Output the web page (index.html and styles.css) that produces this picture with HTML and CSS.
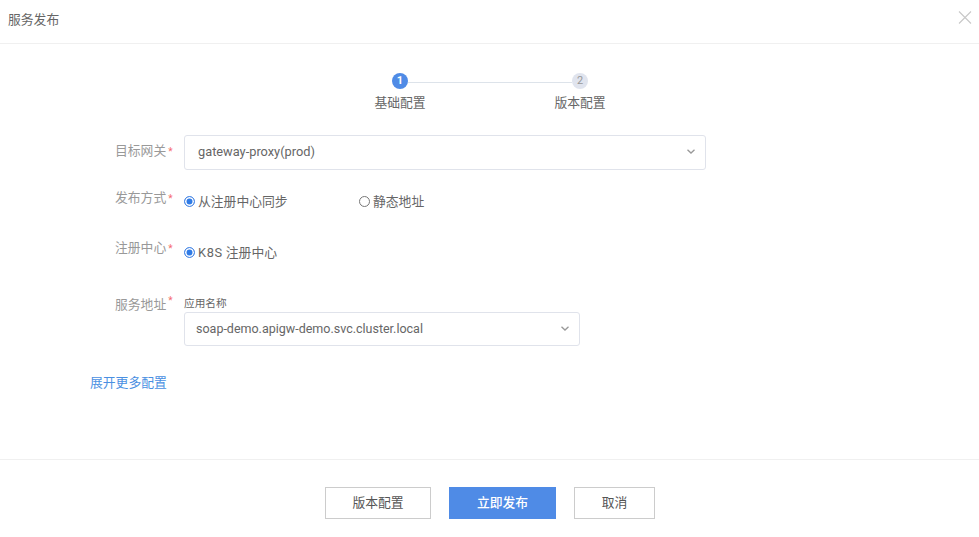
FILE: index.html
```html
<!DOCTYPE html>
<html lang="zh-CN">
<head>
<meta charset="utf-8">
<title>服务发布</title>
<link rel="stylesheet" href="styles.css">
</head>
<body>
<div class="dialog">
  <header class="head">
    <span class="title">服务发布</span>
    <svg class="close" width="14" height="13" viewBox="0 0 14 13"><path d="M1 .5l12 12M13 .5l-12 12" stroke="#c8c8c8" stroke-width="1.1" fill="none"/></svg>
  </header>
  <main class="body">
    <div class="steps">
      <div class="step">
        <span class="dot dot-on">1</span>
        <span class="step-label">基础配置</span>
      </div>
      <span class="step-line"></span>
      <div class="step">
        <span class="dot">2</span>
        <span class="step-label">版本配置</span>
      </div>
    </div>
    <div class="row row-gateway">
      <div class="label">目标网关<i class="star">*</i></div>
      <div class="select select-wide">
        <span>gateway-proxy(prod)</span>
        <svg class="chev" width="8" height="5" viewBox="0 0 8 5"><path d="M.5.7L4 4l3.500-3.300" stroke="#999" stroke-width="1.3" fill="none"/></svg>
      </div>
    </div>
    <div class="row row-mode">
      <div class="label">发布方式<i class="star">*</i></div>
      <div class="radios radios-mode">
        <span class="radio radio-first"><i class="ring ring-on"></i>从注册中心同步</span>
        <span class="radio"><i class="ring"></i>静态地址</span>
      </div>
    </div>
    <div class="row row-registry">
      <div class="label">注册中心<i class="star">*</i></div>
      <div class="radios radios-registry">
        <span class="radio"><i class="ring ring-on"></i><span class="radio-text"><span class="latin">K8S</span> 注册中心</span></span>
      </div>
    </div>
    <div class="row row-service">
      <div class="label">服务地址<i class="star star-high">*</i></div>
      <div class="field">
        <div class="sublabel">应用名称</div>
        <div class="select select-narrow">
          <span>soap-demo.apigw-demo.svc.cluster.local</span>
          <svg class="chev" width="8" height="5" viewBox="0 0 8 5"><path d="M.5.7L4 4l3.500-3.300" stroke="#999" stroke-width="1.3" fill="none"/></svg>
        </div>
      </div>
    </div>
    <a class="more">展开更多配置</a>
  </main>
  <footer class="foot">
    <button class="btn btn-version">版本配置</button>
    <button class="btn btn-primary">立即发布</button>
    <button class="btn btn-cancel">取消</button>
  </footer>
</div>
</body>
</html>
```
FILE: styles.css
```css
* { box-sizing: border-box; }
html, body { margin: 0; height: 100%; background: #fff; }
body {
  font-family: Roboto, "Noto Sans CJK SC", sans-serif;
  font-size: 12.8px;
  color: #666;
  overflow: hidden;
}
.dialog { width: 979px; height: 537px; display: flex; flex-direction: column; }
.head {
  height: 44px;
  flex: none;
  padding: 0 7px 0 8px;
  border-bottom: 1px solid #f0f0f0;
  display: flex;
  align-items: center;
  justify-content: space-between;
}
.title { color: #666; position: relative; top: -3px; }
.close { position: relative; top: -4px; }
.body { height: 415px; flex: none; padding: 29px 0 0 90px; }
.steps { display: flex; align-items: flex-start; margin-left: 285px; width: 230px; height: 62px; }
.step { width: 50px; display: flex; flex-direction: column; align-items: center; }
.dot {
  width: 16px; height: 16px; border-radius: 50%;
  background: #e0e4ee; color: #999;
  font-size: 11px; line-height: 16px; text-align: center;
}
.dot-on { background: #4f8be6; color: #fff; font-weight: 700; }
.step-label { margin-top: 5px; line-height: 18px; color: #666; white-space: nowrap; }
.step-line { width: 164px; margin: 9px -17px 0; height: 1px; background: #dde3ea; flex: none; }
.row { display: flex; align-items: flex-start; }
.label {
  width: 94px; padding-left: 25px; flex: none;
  color: #999; line-height: 18px; white-space: nowrap; position: relative;
}
.star { color: #f56c6c; font-style: normal; margin-left: 2px; font-size: 10px; }
.star-high { position: relative; top: -5px; }
.row-gateway { height: 35px; }
.row-gateway .label { padding-top: 7px; }
.row-mode { margin-top: 19px; height: 32px; }
.row-registry { margin-top: 18px; height: 35px; }
.row-service { margin-top: 21px; }
.row-service .label { padding-top: 1px; }
.select {
  height: 35px; background: #fff;
  border: 1px solid #e0e3eb; border-radius: 3px;
  padding-bottom: 2px;
  display: flex; align-items: center; justify-content: space-between;
  color: #666;
}
.select-wide { width: 522px; padding-left: 13px; padding-right: 10px; }
.select-narrow { width: 396px; height: 34px; padding-left: 11px; padding-right: 10px; font-size: 12.5px; }
.radios { display: flex; }
.radios-mode { padding-top: 4px; }
.radios-registry { padding-top: 5px; }
.radio { display: inline-flex; align-items: center; line-height: 18px; color: #666; }
.radio-first { width: 175px; }
.latin { letter-spacing: .6px; }
.ring {
  width: 11px; height: 11px; border: 1px solid #777; border-radius: 50%;
  margin: 0 3px 2px 0; background: #fff; flex: none;
}
.ring-on { border-color: #4f8be6; background: #2f7be6; box-shadow: inset 0 0 0 1.5px #fff; }
.sublabel { font-size: 10.67px; line-height: 13px; margin: 2px 0 2px; color: #666; }
.more { display: block; margin-top: 28px; color: #4a90e2; line-height: 18px; width: 78px; }
.foot {
  flex: 1; border-top: 1px solid #f0f0f0;
  padding: 27px 0 0 325px; display: flex; gap: 18px; align-items: flex-start;
}
.btn {
  height: 32px; font: inherit; border: 1px solid #ccc; background: #fff; color: #555; padding: 0 0 3px; cursor: pointer;
}
.btn-version { width: 106px; }
.btn-primary { width: 107px; background: #4f8be6; border-color: #4f8be6; color: #fff; font-weight: 500; }
.btn-cancel { width: 81px; }
```
